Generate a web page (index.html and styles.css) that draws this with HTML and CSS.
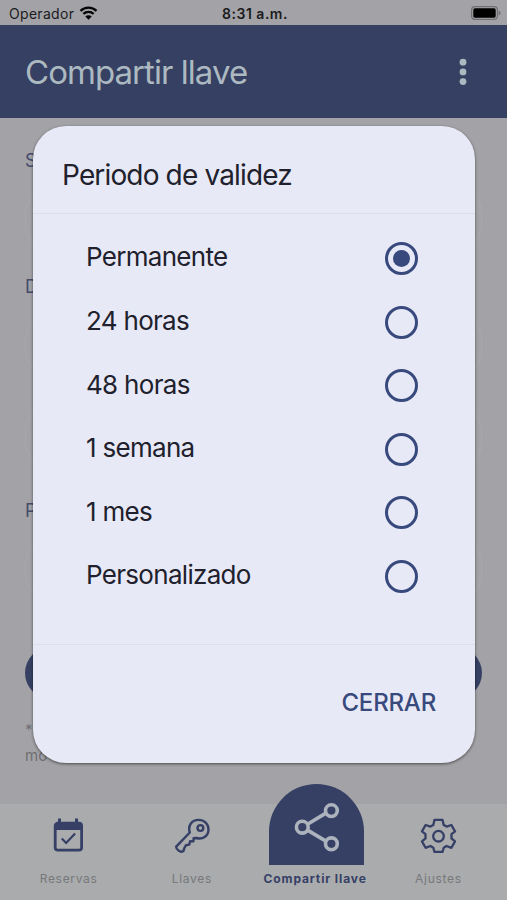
FILE: index.html
```html
<!DOCTYPE html>
<html lang="es">
<head>
    <meta charset="UTF-8">
    <meta name="viewport" content="width=device-width, initial-scale=1.0">
    <title>Compartir llave</title>

    <link rel="stylesheet" href="styles.css">
</head>
<body>

    <div class="status-bar">
        <div class="carrier">
            <span class="carrier-name">Operador</span>
            <svg class="wifi" viewBox="0 0 20 15" width="19" height="14">
                <path d="M1.4 5.2a12.4 12.4 0 0 1 17.2 0M4.5 8.4a8 8 0 0 1 11 0" fill="none" stroke="#050506" stroke-width="2.5"/>
                <path d="M10 14.6L6.6 11.2a4.8 4.8 0 0 1 6.8 0z" fill="#050506"/>
            </svg>
        </div>
        <span class="clock">8:31 a.m.</span>
        <svg class="battery" viewBox="0 0 30 14" width="30" height="14">
            <rect x=".6" y=".6" width="25.8" height="12.8" rx="3.4" fill="none" stroke="#707074" stroke-width="1.2"/>
            <rect x="2.3" y="2.3" width="22.4" height="9.4" rx="1.6" fill="#000"/>
            <path d="M27.6 4.6q2 .8 2 2.4t-2 2.4z" fill="#707074"/>
        </svg>
    </div>

    <header class="header">
        <h1 class="header-title">Compartir llave</h1>
        <svg class="menu" viewBox="0 0 8 28" width="8" height="28" fill="#acb9c0">
            <circle cx="4" cy="4.2" r="3.4"/>
            <circle cx="4" cy="13.9" r="3.4"/>
            <circle cx="4" cy="23.6" r="3.4"/>
        </svg>
    </header>

    <main class="page">
        <form class="share-form">
            <div class="field">
                <span class="field-label">S</span>
                <div class="field-input"></div>
            </div>
            <div class="field field-double">
                <span class="field-label">D</span>
                <div class="field-input"></div>
                <div class="field-input"></div>
            </div>
            <div class="field">
                <span class="field-label">P</span>
                <div class="field-input"></div>
            </div>
            <div class="share-button"></div>
            <p class="note">*<br>mo</p>
        </form>

        <!-- Ventana de periodo de validez -->
        <section class="dialog">
            <h2 class="dialog-title">Periodo de validez</h2>
            <div class="options">
                <div class="option"><span>Permanente</span><i class="radio checked"></i></div>
                <div class="option"><span>24 horas</span><i class="radio"></i></div>
                <div class="option"><span>48 horas</span><i class="radio"></i></div>
                <div class="option"><span>1 semana</span><i class="radio"></i></div>
                <div class="option"><span>1 mes</span><i class="radio"></i></div>
                <div class="option"><span>Personalizado</span><i class="radio"></i></div>
            </div>
            <div class="dialog-footer">
                <span class="close">CERRAR</span>
            </div>
        </section>
    </main>

    <nav class="tabs">
        <div class="tab">
            <svg class="tab-icon" viewBox="0 0 36 36" width="36" height="36">
                <path d="M8.5 1.5v5M25.5 1.5v5" stroke="#363f66" stroke-width="3"/>
                <rect x="4.2" y="6.2" width="26.4" height="27" rx="2.6" fill="none" stroke="#363f66" stroke-width="2.8"/>
                <path d="M4 6h26.8v7H4z" fill="#363f66"/>
                <path d="M10.8 21.5l4.3 4.5 9-9.5" fill="none" stroke="#363f66" stroke-width="2.2"/>
            </svg>
            <span class="tab-label">Reservas</span>
        </div>
        <div class="tab">
            <svg class="tab-icon" viewBox="0 0 36 36" width="36" height="36" fill="none" stroke="#363f66" stroke-width="2.4" stroke-linejoin="round">
                <path d="M15.8 15.5C13.5 8.5 18 2.9 24.6 2.9C30.3 2.9 34.5 7.2 34.5 12.4C34.5 18.5 29 23 22.4 21L19.6 21.3L19.4 24.4L16.2 24.2L15.2 27.6L12 28.2L10.4 31L9.4 34Q7 35.6 4.6 33.6Q2 31.6 2.2 29.7Z"/>
                <circle cx="26.4" cy="11" r="2.9"/>
            </svg>
            <span class="tab-label">Llaves</span>
        </div>
        <div class="tab active">
            <div class="tab-shape">
                <svg viewBox="0 0 46 50" width="46" height="50" fill="none" stroke="#acb3bd" stroke-width="3.6">
                    <path d="M13.5 22.3L31.5 11.4M13.5 28.1L31.5 38.9"/>
                    <circle cx="8.3" cy="25.2" r="5.9"/>
                    <circle cx="37.4" cy="8.6" r="5.9"/>
                    <circle cx="37.4" cy="41.8" r="5.9"/>
                </svg>
            </div>
            <span class="tab-label">Compartir llave</span>
        </div>
        <div class="tab">
            <svg class="tab-icon" viewBox="0 0 40 36" width="40" height="36" fill="none" stroke="#363f66" stroke-width="2.3" stroke-linejoin="round">
                <path d="M16.5 2.8H24.5L25.7 7.9L28.6 9.6L33.4 8L37 14.4L33.5 17.2V21.4L37 24.4L33.4 30.8L28.6 29L25.7 30.8L24.5 35H16.5L15.3 30.8L12.4 29L7.6 30.8L4 24.4L7.5 21.4V17.2L4 14.4L7.6 8L12.4 9.6L15.3 7.9Z"/>
                <circle cx="20.5" cy="19.2" r="5.3"/>
            </svg>
            <span class="tab-label">Ajustes</span>
        </div>
    </nav>

</body>
</html>
```
FILE: styles.css
```css
* {
    box-sizing: border-box;
}

body {
    font-family: Inter, "Liberation Sans", sans-serif;
    background-color: #a3a3a7;
    margin: 0;
    height: 900px;
    display: flex;
    flex-direction: column;
    overflow: hidden;
}

.status-bar {
    height: 25px;
    padding: 2px 6px 0 9px;
    display: grid;
    grid-template-columns: 1fr auto 1fr;
    align-items: center;
    font-size: 14px;
    color: #1b1b1e;
}

.carrier {
    display: flex;
    align-items: center;
    gap: 5px;
    letter-spacing: 0.3px;
}

.wifi {
    margin-top: -2px;
}

.clock {
    font-weight: 600;
    letter-spacing: 0.5px;
}

.battery {
    justify-self: end;
    margin-top: -2px;
}

.header {
    height: 93px;
    padding: 0 40px 0 25px;
    background-color: #364062;
    display: flex;
    align-items: center;
    justify-content: space-between;
}

.header-title {
    margin: 0;
    font-size: 33px;
    font-weight: 400;
    color: #acb9c0;
    letter-spacing: -0.95px;
}

.page {
    position: relative;
    height: 686px;
}

.share-form {
    height: 100%;
    padding: 32px 25px 0;
}

.field {
    height: 126px;
}

.field-double {
    height: 224px;
}

.field-label {
    display: block;
    height: 22px;
    margin-bottom: 17px;
    font-size: 18px;
    line-height: 22px;
    color: #444b6b;
}

.field-input {
    height: 60px;
    margin-bottom: 32px;
    border: 1px solid #a8a9ac;
    border-radius: 24px;
}

.share-button {
    height: 52px;
    margin-top: 21px;
    border-radius: 26px;
    background-color: #364062;
}

.note {
    margin: 18px 0 0;
    font-size: 15px;
    line-height: 26px;
    color: #707074;
}

/* Ventana sobre el formulario */
.dialog {
    position: absolute;
    top: 8px;
    left: 33px;
    width: 442px;
    height: 637px;
    border-radius: 33px;
    background-color: #e8e9f6;
    box-shadow: 0 1px 3px rgba(0, 0, 0, 0.55);
    display: flex;
    flex-direction: column;
    color: #20212c;
}

.dialog-title {
    height: 88px;
    margin: 0;
    padding: 32px 29px 0;
    border-bottom: 1px solid #dddeea;
    font-size: 28px;
    font-weight: 400;
    line-height: 35px;
    letter-spacing: -0.85px;
}

.options {
    height: 430px;
    padding: 12.7px 57px 0 53px;
}

.option {
    height: 63.6px;
    display: flex;
    align-items: center;
    justify-content: space-between;
    font-size: 26px;
    letter-spacing: -0.7px;
}

.option span {
    margin-top: -3px;
}

.radio {
    width: 33px;
    height: 33px;
    border: 3px solid #384a7d;
    border-radius: 50%;
    display: flex;
    align-items: center;
    justify-content: center;
}

.radio.checked::after {
    content: "";
    width: 17px;
    height: 17px;
    border-radius: 50%;
    background-color: #384a7d;
}

.dialog-footer {
    height: 119px;
    padding: 0 39px 3px 0;
    border-top: 1px solid #dddeea;
    display: flex;
    align-items: center;
    justify-content: flex-end;
}

.close {
    font-size: 24px;
    font-weight: 500;
    letter-spacing: -0.2px;
    color: #384a7d;
}

.tabs {
    height: 96px;
    padding: 0 7px;
    background-color: #a9abad;
    display: grid;
    grid-template-columns: repeat(4, 1fr);
    grid-template-rows: 96px;
}

.tab {
    display: flex;
    flex-direction: column;
    align-items: center;
    justify-content: flex-end;
    padding-bottom: 14px;
}

.tab-icon {
    margin-bottom: 18px;
}

.tab-shape {
    width: 95px;
    height: 81px;
    flex-shrink: 0;
    margin: 0 0 6px 3px;
    padding-top: 5px;
    border-radius: 48px 48px 0 0;
    background-color: #363f64;
    display: flex;
    align-items: center;
    justify-content: center;
}

.tab-label {
    font-size: 12px;
    line-height: 15px;
    letter-spacing: 0.7px;
    color: #77797c;
    white-space: nowrap;
}

.active .tab-label {
    font-weight: 700;
    letter-spacing: 0.9px;
    color: #363f66;
}
```
